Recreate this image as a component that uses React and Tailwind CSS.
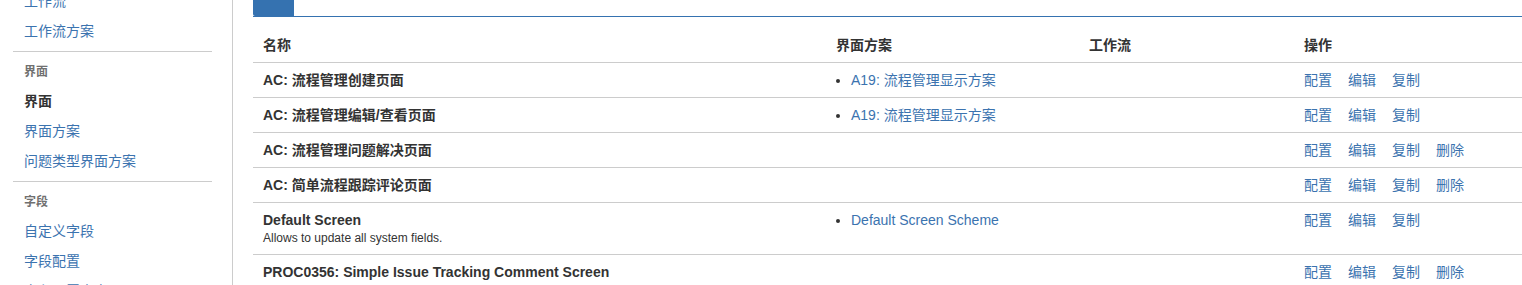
import React from 'react';

const font = { fontFamily: '"Liberation Sans", Arial, "Noto Sans CJK SC", sans-serif' };

const groups = [
  { heading: null, items: [{ label: '工作流' }, { label: '工作流方案' }] },
  { heading: '界面', items: [{ label: '界面', active: true }, { label: '界面方案' }, { label: '问题类型界面方案' }] },
  { heading: '字段', items: [{ label: '自定义字段' }, { label: '字段配置' }, { label: '字段配置方案' }] },
];

const rows = [
  { name: 'AC: 流程管理创建页面', scheme: 'A19: 流程管理显示方案', del: false },
  { name: 'AC: 流程管理编辑/查看页面', scheme: 'A19: 流程管理显示方案', del: false },
  { name: 'AC: 流程管理问题解决页面', del: true },
  { name: 'AC: 简单流程跟踪评论页面', del: true },
  { name: 'Default Screen', desc: 'Allows to update all system fields.', scheme: 'Default Screen Scheme', del: false },
  { name: 'PROC0356: Simple Issue Tracking Comment Screen', del: true },
];

const Sidebar = () => (
  <div className="w-[233px] shrink-0 border-r border-[#cccccc] pl-[13px] pr-[20px]">
    <div className="-mt-[14px]">
      {groups.map((g, gi) => (
        <div key={gi}>
          {gi > 0 && <div className="mt-[5px] border-t border-[#cccccc]" />}
          {g.heading && (
            <div className="pl-[11px] pt-[10px] pb-[4px] text-[12px] leading-[20px] font-bold text-[#707070]">
              {g.heading}
            </div>
          )}
          {g.items.map((it) => (
            <div
              key={it.label}
              className={
                'pl-[11px] h-[30px] text-[14px] leading-[30px] ' +
                (it.active ? 'font-bold text-[#333333]' : 'text-[#3b73af]')
              }
            >
              {it.label}
            </div>
          ))}
        </div>
      ))}
    </div>
  </div>
);

const Actions = ({ del }) => (
  <div className="flex gap-4 text-[#3b73af]">
    <span>配置</span>
    <span>编辑</span>
    <span>复制</span>
    {del && <span>删除</span>}
  </div>
);

const cols = 'grid grid-cols-[573px_253px_215px_1fr]';

export default function App() {
  return (
    <div className="flex h-[285px] overflow-hidden bg-white text-[14px] text-[#333333]" style={font}>
      <Sidebar />
      <div className="flex-1 pl-[20px]">
        <div className="flex border-b border-[#3572b0]">
          <div className="w-[41px] h-[16px] bg-[#3572b0] rounded-bl-[2px]" />
        </div>
        <div className="mt-[11px]">
          <div className={cols + ' border-b border-[#cccccc] font-bold'}>
            <div className="px-[10px] py-[7px] leading-[20px]">名称</div>
            <div className="px-[10px] py-[7px] leading-[20px]">界面方案</div>
            <div className="px-[10px] py-[7px] leading-[20px]">工作流</div>
            <div className="px-[10px] py-[7px] leading-[20px]">操作</div>
          </div>
          {rows.map((r) => (
            <div key={r.name} className={cols + ' border-b border-[#cccccc] leading-[20px]'}>
              <div className="px-[10px] py-[7px]">
                <div className="font-bold">{r.name}</div>
                {r.desc && <div className="text-[12px] leading-[17px] text-[#333333]">{r.desc}</div>}
              </div>
              <div className="px-[10px] py-[7px]">
                {r.scheme && (
                  <ul className="list-disc pl-[15px] marker:text-[#333333]">
                    <li className="text-[#3b73af]">{r.scheme}</li>
                  </ul>
                )}
              </div>
              <div className="px-[10px] py-[7px]" />
              <div className="px-[10px] py-[7px]">
                <Actions del={r.del} />
              </div>
            </div>
          ))}
        </div>
      </div>
    </div>
  );
}
